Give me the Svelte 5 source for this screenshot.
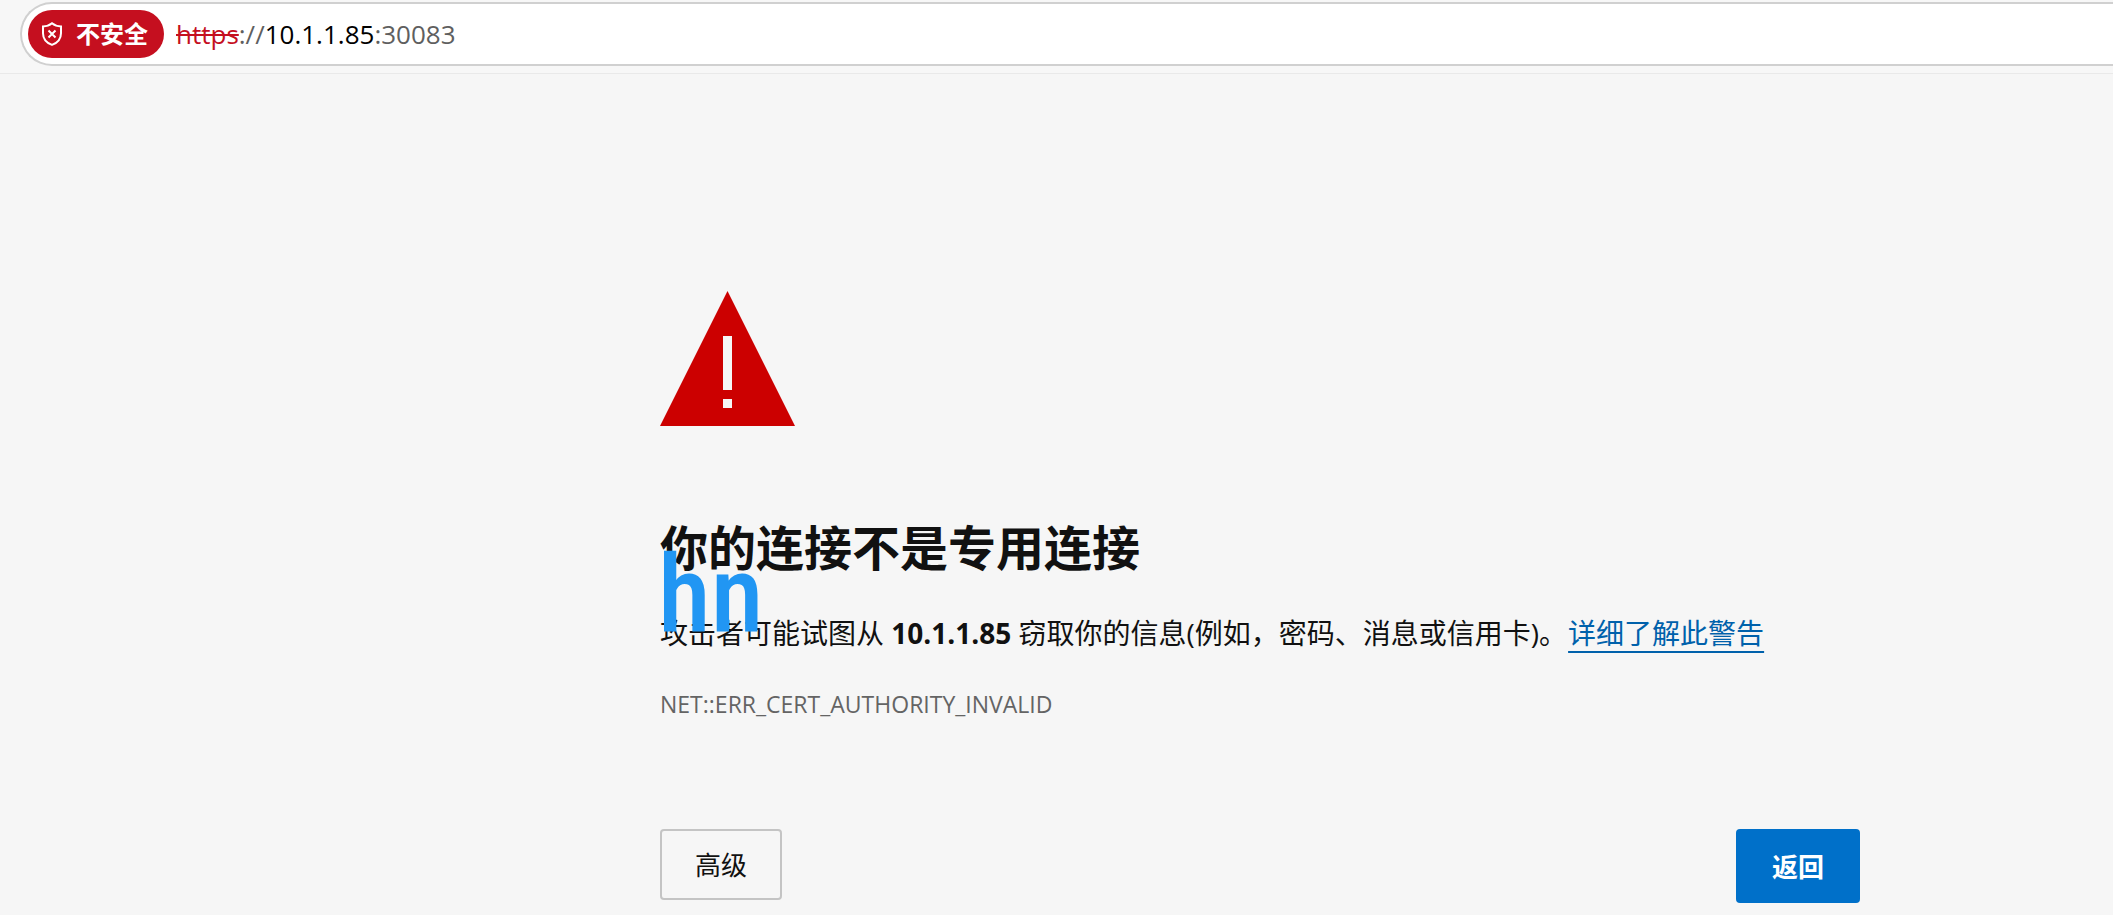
<script>
  let host = "10.1.1.85";
  let port = ":30083";
  let errorCode = "NET::ERR_CERT_AUTHORITY_INVALID";
  let watermark = "hn";
</script>

<div class="page">
  <header class="toolbar">
    <div class="address">
      <button type="button" class="badge">
        <svg class="shield" viewBox="0 0 20 24" aria-hidden="true">
          <path d="M10 1.2C7.6 3.2 4.8 4.2 1 4.4V11.2C1 16.8 4.2 20.7 10 22.9C15.8 20.7 19 16.8 19 11.2V4.4C15.2 4.2 12.4 3.2 10 1.2Z" />
          <path d="M6.5 8.5L13.5 15.5M13.5 8.5L6.5 15.5" />
        </svg>
        <span class="label">不安全</span>
      </button>
      <div class="url"><s>https</s>://<span class="host">{host}</span>{port}</div>
    </div>
  </header>

  <main class="content">
    <svg class="warning" viewBox="0 0 15 15" aria-hidden="true">
      <path fill="#cc0000" d="M7.5 0L15 15H0Z" />
      <path fill="#f6f6f6" d="M7 5H8V11H7ZM7 12H8V13H7Z" />
    </svg>

    <div class="title">
      <h1>你的连接不是专用连接</h1>
      <span class="watermark">{watermark}</span>
    </div>

    <p class="message">
      攻击者可能试图从 <strong>{host}</strong> 窃取你的信息(例如，密码、消息或信用卡)。<a href="#learn-more">详细了解此警告</a>
    </p>
    <p class="code">{errorCode}</p>

    <div class="actions">
      <button type="button" class="btn">高级</button>
      <button type="button" class="btn primary">返回</button>
    </div>
  </main>
</div>

<style>
  :global(body) {
    background: #f6f6f6;
    margin: 0;
  }

  .page {
    color: #111111;
    font-family: "Open Sans", "Noto Sans CJK SC", sans-serif;
    min-height: 100vh;
    overflow: hidden;
  }

  .toolbar {
    background: #f7f7f7;
    border-bottom: 1px solid #e9e9e9;
    padding: 2px 0 7px 20px;
  }

  .address {
    align-items: center;
    background: #ffffff;
    border: 2px solid #d0d0d0;
    border-radius: 32px 0 0 32px;
    border-right: 0;
    display: flex;
    gap: 12px;
    padding: 6px;
  }

  .badge {
    align-items: center;
    background: #c50f1f;
    border: 0;
    border-radius: 24px;
    color: #ffffff;
    display: flex;
    font: bold 24px "Noto Sans CJK SC", sans-serif;
    gap: 14px;
    height: 48px;
    padding: 0 16px 0 14px;
  }

  .label {
    padding-bottom: 4px;
  }

  .shield {
    fill: none;
    height: 24px;
    stroke: #ffffff;
    stroke-width: 2;
    width: 20px;
  }

  .url {
    color: #5f5f5f;
    font-size: 26px;
    line-height: 48px;
    white-space: nowrap;
  }

  .url s {
    color: #c50f1f;
    text-decoration-thickness: 2px;
  }

  .host {
    color: #000000;
  }

  .content {
    padding: 217px 253px 12px 660px;
  }

  .warning {
    display: block;
    height: 135px;
    width: 135px;
  }

  .title {
    margin-top: 94px;
    position: relative;
  }

  h1 {
    font-size: 48px;
    line-height: 56px;
    margin: 0;
  }

  .watermark {
    color: #2196f3;
    font: 500 108px "Roboto Condensed", "Noto Sans Mono CJK SC", "DejaVu Sans Condensed", sans-serif;
    left: -2px;
    line-height: 112px;
    pointer-events: none;
    position: absolute;
    top: 19px;
  }

  .message {
    font-size: 28px;
    line-height: 40px;
    margin: 37px 0 0;
  }

  .message a {
    color: #0061ab;
    margin-left: 1px;
    text-decoration: underline 2px;
    text-underline-offset: 7px;
  }

  .code {
    color: #646464;
    font-size: 23px;
    line-height: 32px;
    margin: 35px 0 0;
  }

  .actions {
    align-items: flex-start;
    display: flex;
    justify-content: space-between;
    margin-top: 109px;
  }

  .btn {
    background: transparent;
    border: 2px solid #c4c4c4;
    border-radius: 4px;
    color: #111111;
    font: 26px "Noto Sans CJK SC", sans-serif;
    height: 71px;
    padding: 0 33px 2px;
  }

  .primary {
    background: #0070c9;
    border: 0;
    color: #ffffff;
    font-weight: bold;
    height: 74px;
    padding: 0 36px 2px;
  }
</style>
